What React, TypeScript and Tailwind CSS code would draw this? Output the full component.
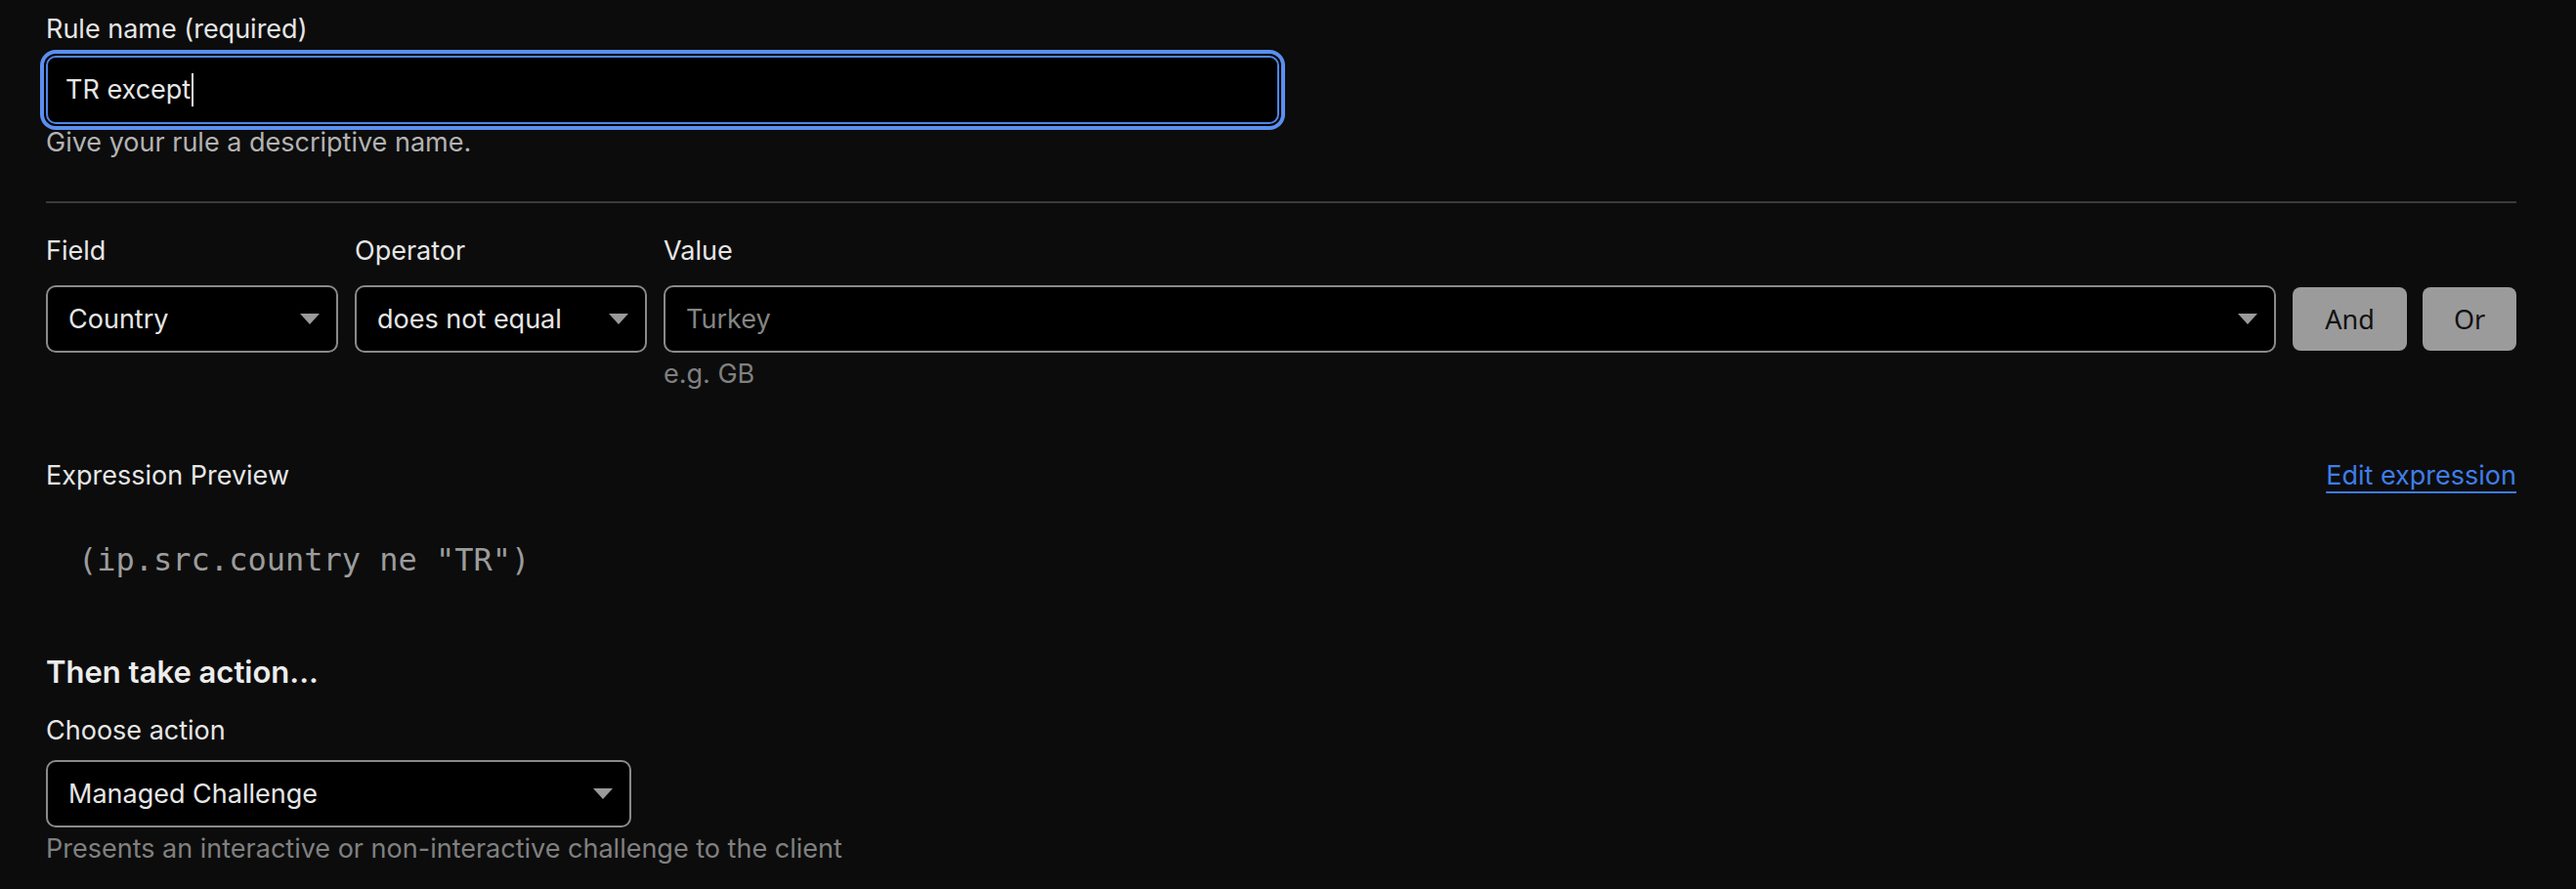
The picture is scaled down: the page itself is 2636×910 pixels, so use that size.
import React from "react";

function Caret() {
  return (
    <svg width="20" height="11" viewBox="0 0 20 11" className="shrink-0">
      <path d="M0 0 L20 0 L10 11 Z" fill="#9a9a9a" />
    </svg>
  );
}

interface SelectProps {
  value: string;
  placeholder?: boolean;
  className?: string;
}

function Select({ value, placeholder, className }: SelectProps) {
  return (
    <div
      className={`flex h-[69px] items-center justify-between rounded-[10px] border-2 border-[#8a8a8a] bg-black pl-[21px] pr-[17px] ${className ?? ""}`}
    >
      <span className={placeholder ? "text-[#858585]" : "text-[#e6e6e6]"}>
        {value}
      </span>
      <Caret />
    </div>
  );
}

export default function App() {
  return (
    <div className="min-h-screen bg-[#0c0c0c] pl-[47px] pr-[61px] pt-[12px] font-['Inter',sans-serif] text-[27px] leading-[36px] text-[#e6e6e6]">
      {/* rule name */}
      <div className="w-[1262px]">
        <label className="block">Rule name (required)</label>
        <div className="mt-[9px] flex h-[70px] items-center rounded-[10px] border-2 border-[#4f86e8] bg-black px-[18px] shadow-[0_0_0_2px_#000,0_0_0_6px_#5b8ff0]">
          <span className="text-[#e6e6e6]">TR except</span>
          <span className="ml-[1px] h-[34px] w-[2px] bg-[#e6e6e6]" />
        </div>
        <p className="mt-[3px] leading-[32px] text-[#b3b3b3]">
          Give your rule a descriptive name.
        </p>
      </div>

      <div className="mt-[44px] h-[2px] bg-[#3a3a3a]" />

      {/* expression builder */}
      <div className="mt-[31px] flex gap-[17px]">
        <div className="w-[299px] shrink-0">
          <div>Field</div>
          <Select value="Country" className="mt-[17px]" />
        </div>
        <div className="w-[299px] shrink-0">
          <div>Operator</div>
          <Select value="does not equal" className="mt-[17px]" />
        </div>
        <div className="min-w-0 flex-1">
          <div>Value</div>
          <Select value="Turkey" placeholder className="mt-[17px]" />
          <p className="mt-[6px] leading-[32px] text-[#808080]">e.g. GB</p>
        </div>
        <div className="flex gap-[16px] pt-[55px]">
          <button className="h-[65px] w-[117px] rounded-[8px] bg-[#9b9b9b] font-['Noto_Sans',sans-serif] text-[27px] text-[#111]">
            And
          </button>
          <button className="h-[65px] w-[96px] rounded-[8px] bg-[#9b9b9b] font-['Noto_Sans',sans-serif] text-[27px] text-[#111]">
            Or
          </button>
        </div>
      </div>

      {/* preview */}
      <div className="mt-[70px] flex items-center justify-between">
        <div>Expression Preview</div>
        <a className="text-[#3f7ee8] underline decoration-2 underline-offset-[7px]">
          Edit expression
        </a>
      </div>
      <pre className="mt-[48px] pl-[33px] font-['DejaVu_Sans_Mono',monospace] text-[32px] leading-[40px] text-[#9c9c9c]">
        (ip.src.country ne "TR")
      </pre>

      {/* action */}
      <h3 className="mt-[75px] text-[31px] font-semibold leading-[40px] text-[#ececec]">
        Then take action...
      </h3>
      <div className="mt-[22px]">
        <div>Choose action</div>
        <Select value="Managed Challenge" className="mt-[12px] h-[68px] w-[599px]" />
        <p className="mt-[6px] leading-[32px] text-[#808080]">
          Presents an interactive or non-interactive challenge to the client
        </p>
      </div>
    </div>
  );
}
